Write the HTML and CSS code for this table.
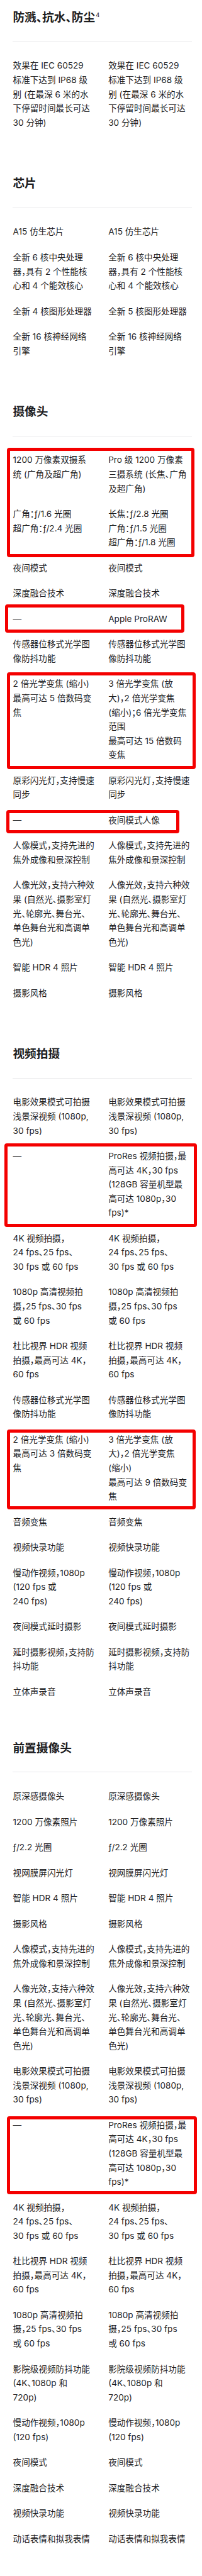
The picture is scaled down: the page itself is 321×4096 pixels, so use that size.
FILE: index.html
```html
<!DOCTYPE html>
<html lang="zh-CN">
<head>
<meta charset="utf-8">
<title>iPhone 13 对比</title>
<link rel="stylesheet" href="styles.css">
</head>
<body>
<main class="specs">

  <section class="spec">
    <h2 class="spec-title">防溅、抗水、防尘<sup class="fn">4</sup></h2>
    <div class="rows">
      <div class="row">
        <p class="cell">效果在 IEC 60529<br>标准下达到 IP68 级<br>别 (在最深 6 米的水<br>下停留时间最长可达<br>30 分钟)</p>
        <p class="cell">效果在 IEC 60529<br>标准下达到 IP68 级<br>别 (在最深 6 米的水<br>下停留时间最长可达<br>30 分钟)</p>
      </div>
    </div>
  </section>

  <section class="spec">
    <h2 class="spec-title">芯片</h2>
    <div class="rows">
      <div class="row"><p class="cell">A15 仿生芯片</p><p class="cell">A15 仿生芯片</p></div>
      <div class="row">
        <p class="cell">全新 6 核中央处理<br>器，具有 2 个性能核<br>心和 4 个能效核心</p>
        <p class="cell">全新 6 核中央处理<br>器，具有 2 个性能核<br>心和 4 个能效核心</p>
      </div>
      <div class="row"><p class="cell">全新 4 核图形处理器</p><p class="cell">全新 5 核图形处理器</p></div>
      <div class="row"><p class="cell">全新 16 核神经网络<br>引擎</p><p class="cell">全新 16 核神经网络<br>引擎</p></div>
    </div>
  </section>

  <section class="spec">
    <h2 class="spec-title">摄像头</h2>
    <div class="rows">
      <div class="mark mark-a">
        <div class="row">
          <p class="cell">1200 万像素双摄系<br>统 (广角及超广角)</p>
          <p class="cell">Pro 级 1200 万像素<br>三摄系统 (长焦、广角<br>及超广角)</p>
        </div>
        <div class="row">
          <p class="cell">广角：ƒ/1.6 光圈<br>超广角：ƒ/2.4 光圈</p>
          <p class="cell">长焦：ƒ/2.8 光圈<br>广角：ƒ/1.5 光圈<br>超广角：ƒ/1.8 光圈</p>
        </div>
      </div>
      <div class="row"><p class="cell">夜间模式</p><p class="cell">夜间模式</p></div>
      <div class="row"><p class="cell">深度融合技术</p><p class="cell">深度融合技术</p></div>
      <div class="mark mark-b">
        <div class="row"><p class="cell">—</p><p class="cell">Apple ProRAW</p></div>
      </div>
      <div class="row"><p class="cell">传感器位移式光学图<br>像防抖功能</p><p class="cell">传感器位移式光学图<br>像防抖功能</p></div>
      <div class="mark mark-c">
        <div class="row">
          <p class="cell">2 倍光学变焦 (缩小)<br>最高可达 5 倍数码变<br>焦</p>
          <p class="cell">3 倍光学变焦 (放<br>大)，2 倍光学变焦<br>(缩小)；6 倍光学变焦<br>范围<br>最高可达 15 倍数码<br>变焦</p>
        </div>
      </div>
      <div class="row"><p class="cell">原彩闪光灯，支持慢速<br>同步</p><p class="cell">原彩闪光灯，支持慢速<br>同步</p></div>
      <div class="mark mark-d">
        <div class="row"><p class="cell">—</p><p class="cell">夜间模式人像</p></div>
      </div>
      <div class="row"><p class="cell">人像模式，支持先进的<br>焦外成像和景深控制</p><p class="cell">人像模式，支持先进的<br>焦外成像和景深控制</p></div>
      <div class="row">
        <p class="cell">人像光效，支持六种效<br>果 (自然光、摄影室灯<br>光、轮廓光、舞台光、<br>单色舞台光和高调单<br>色光)</p>
        <p class="cell">人像光效，支持六种效<br>果 (自然光、摄影室灯<br>光、轮廓光、舞台光、<br>单色舞台光和高调单<br>色光)</p>
      </div>
      <div class="row"><p class="cell">智能 HDR 4 照片</p><p class="cell">智能 HDR 4 照片</p></div>
      <div class="row"><p class="cell">摄影风格</p><p class="cell">摄影风格</p></div>
    </div>
  </section>

  <section class="spec">
    <h2 class="spec-title">视频拍摄</h2>
    <div class="rows">
      <div class="row"><p class="cell">电影效果模式可拍摄<br>浅景深视频 (1080p,<br>30 fps)</p><p class="cell">电影效果模式可拍摄<br>浅景深视频 (1080p,<br>30 fps)</p></div>
      <div class="mark mark-e">
        <div class="row"><p class="cell">—</p><p class="cell">ProRes 视频拍摄，最<br>高可达 4K，30 fps<br>(128GB 容量机型最<br>高可达 1080p，30<br>fps)*</p></div>
      </div>
      <div class="row"><p class="cell">4K 视频拍摄，<br>24 fps、25 fps、<br>30 fps 或 60 fps</p><p class="cell">4K 视频拍摄，<br>24 fps、25 fps、<br>30 fps 或 60 fps</p></div>
      <div class="row"><p class="cell">1080p 高清视频拍<br>摄，25 fps、30 fps<br>或 60 fps</p><p class="cell">1080p 高清视频拍<br>摄，25 fps、30 fps<br>或 60 fps</p></div>
      <div class="row"><p class="cell">杜比视界 HDR 视频<br>拍摄，最高可达 4K，<br>60 fps</p><p class="cell">杜比视界 HDR 视频<br>拍摄，最高可达 4K，<br>60 fps</p></div>
      <div class="row"><p class="cell">传感器位移式光学图<br>像防抖功能</p><p class="cell">传感器位移式光学图<br>像防抖功能</p></div>
      <div class="mark mark-f">
        <div class="row">
          <p class="cell">2 倍光学变焦 (缩小)<br>最高可达 3 倍数码变<br>焦</p>
          <p class="cell">3 倍光学变焦 (放<br>大)，2 倍光学变焦<br>(缩小)<br>最高可达 9 倍数码变<br>焦</p>
        </div>
      </div>
      <div class="row"><p class="cell">音频变焦</p><p class="cell">音频变焦</p></div>
      <div class="row"><p class="cell">视频快录功能</p><p class="cell">视频快录功能</p></div>
      <div class="row"><p class="cell">慢动作视频，1080p<br>(120 fps 或<br>240 fps)</p><p class="cell">慢动作视频，1080p<br>(120 fps 或<br>240 fps)</p></div>
      <div class="row"><p class="cell">夜间模式延时摄影</p><p class="cell">夜间模式延时摄影</p></div>
      <div class="row"><p class="cell">延时摄影视频，支持防<br>抖功能</p><p class="cell">延时摄影视频，支持防<br>抖功能</p></div>
      <div class="row"><p class="cell">立体声录音</p><p class="cell">立体声录音</p></div>
    </div>
  </section>

  <section class="spec spec-front">
    <h2 class="spec-title">前置摄像头</h2>
    <div class="rows">
      <div class="row"><p class="cell">原深感摄像头</p><p class="cell">原深感摄像头</p></div>
      <div class="row"><p class="cell">1200 万像素照片</p><p class="cell">1200 万像素照片</p></div>
      <div class="row"><p class="cell">ƒ/2.2 光圈</p><p class="cell">ƒ/2.2 光圈</p></div>
      <div class="row"><p class="cell">视网膜屏闪光灯</p><p class="cell">视网膜屏闪光灯</p></div>
      <div class="row"><p class="cell">智能 HDR 4 照片</p><p class="cell">智能 HDR 4 照片</p></div>
      <div class="row"><p class="cell">摄影风格</p><p class="cell">摄影风格</p></div>
      <div class="row"><p class="cell">人像模式，支持先进的<br>焦外成像和景深控制</p><p class="cell">人像模式，支持先进的<br>焦外成像和景深控制</p></div>
      <div class="row">
        <p class="cell">人像光效，支持六种效<br>果 (自然光、摄影室灯<br>光、轮廓光、舞台光、<br>单色舞台光和高调单<br>色光)</p>
        <p class="cell">人像光效，支持六种效<br>果 (自然光、摄影室灯<br>光、轮廓光、舞台光、<br>单色舞台光和高调单<br>色光)</p>
      </div>
      <div class="row"><p class="cell">电影效果模式可拍摄<br>浅景深视频 (1080p,<br>30 fps)</p><p class="cell">电影效果模式可拍摄<br>浅景深视频 (1080p,<br>30 fps)</p></div>
      <div class="mark mark-g">
        <div class="row"><p class="cell">—</p><p class="cell">ProRes 视频拍摄，最<br>高可达 4K，30 fps<br>(128GB 容量机型最<br>高可达 1080p，30<br>fps)*</p></div>
      </div>
      <div class="row"><p class="cell">4K 视频拍摄，<br>24 fps、25 fps、<br>30 fps 或 60 fps</p><p class="cell">4K 视频拍摄，<br>24 fps、25 fps、<br>30 fps 或 60 fps</p></div>
      <div class="row"><p class="cell">杜比视界 HDR 视频<br>拍摄，最高可达 4K，<br>60 fps</p><p class="cell">杜比视界 HDR 视频<br>拍摄，最高可达 4K，<br>60 fps</p></div>
      <div class="row"><p class="cell">1080p 高清视频拍<br>摄，25 fps、30 fps<br>或 60 fps</p><p class="cell">1080p 高清视频拍<br>摄，25 fps、30 fps<br>或 60 fps</p></div>
      <div class="row"><p class="cell">影院级视频防抖功能<br>(4K、1080p 和<br>720p)</p><p class="cell">影院级视频防抖功能<br>(4K、1080p 和<br>720p)</p></div>
      <div class="row"><p class="cell">慢动作视频，1080p<br>(120 fps)</p><p class="cell">慢动作视频，1080p<br>(120 fps)</p></div>
      <div class="row"><p class="cell">夜间模式</p><p class="cell">夜间模式</p></div>
      <div class="row"><p class="cell">深度融合技术</p><p class="cell">深度融合技术</p></div>
      <div class="row"><p class="cell">视频快录功能</p><p class="cell">视频快录功能</p></div>
      <div class="row"><p class="cell">动话表情和拟我表情</p><p class="cell">动话表情和拟我表情</p></div>
    </div>
  </section>

</main>
</body>
</html>
```

FILE: styles.css
```css
html, body {
  margin: 0;
  padding: 0;
  background: #ffffff;
}

body {
  font-family: Inter, "Noto Sans CJK SC", sans-serif;
  color: #1d1d1f;
  font-feature-settings: "halt";
}

.specs {
  padding: 14.9px 16.4px 40px 20px;
}

.spec + .spec {
  margin-top: 72.6px;
}

.spec + .spec-front {
  margin-top: 65px;
}

.spec-title {
  margin: 0 0 26.8px;
  padding: 0 0 24.8px 0.4px;
  font-size: 18.7px;
  line-height: 26px;
  font-weight: 700;
  border-bottom: 1px solid #e8e8ea;
}

.fn {
  font-size: 9.4px;
  font-weight: 400;
  line-height: 0;
  vertical-align: 7px;
  margin-left: 1px;
}

.rows,
.mark {
  display: flex;
  flex-direction: column;
  gap: 18px;
}

.row {
  display: grid;
  grid-template-columns: 1fr 1fr;
  column-gap: 18.6px;
}

.cell {
  margin: 0;
  padding-left: 0.6px;
  font-size: 13.6px;
  line-height: 22.55px;
  white-space: nowrap;
}

/* red annotation frames drawn over groups of rows */
.mark {
  position: relative;
}

.mark::after {
  content: "";
  position: absolute;
  border: 5.3px solid #f40000;
  border-radius: 4px;
  pointer-events: none;
}

.mark-a::after { top: -8.7px; bottom: -12px; left: -9.4px; right: -4.7px; }
.mark-b::after { top: -11.4px; bottom: -10.7px; left: -12px; right: 11.4px; }
.mark-c::after { top: -7.3px; bottom: -11.4px; left: -9.4px; right: -6.7px; }
.mark-d::after { top: -5.3px; bottom: -9.4px; left: -10px; right: 20px; }
.mark-e::after { top: -8.7px; bottom: -10.7px; left: -12.7px; right: -8px; }
.mark-f::after { top: -5.3px; bottom: -9.4px; left: -8.7px; right: -6.7px; }
.mark-g::after { top: -3.3px; bottom: -8px; left: -8.7px; right: -8px; }
```
